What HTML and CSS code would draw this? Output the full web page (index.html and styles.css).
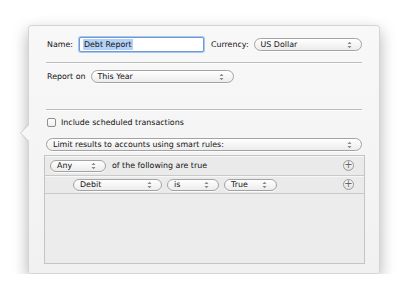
FILE: index.html
```html
<!DOCTYPE html>
<html lang="en">
<head>
  <meta charset="UTF-8" />
  <title>Debt Report</title>
  <link rel="stylesheet" href="styles.css">
</head>
<body>
  <div class="panel">
    <div class="row">
      <span class="label">Name:</span>
      <div class="field"><span class="sel">Debt Report</span></div>
      <span class="label">Currency:</span>
      <div class="popup grow">US Dollar<svg class="arrows" width="5" height="8" viewBox="0 0 5 8"><path d="M0.5 3 L2.5 0.8 L4.5 3 Z M0.5 5 L2.5 7.2 L4.5 5 Z" fill="#888"/></svg></div>
    </div>

    <div class="divider"></div>

    <div class="row report">
      <span class="label">Report on</span>
      <div class="popup w-year">This Year<svg class="arrows" width="5" height="8" viewBox="0 0 5 8"><path d="M0.5 3 L2.5 0.8 L4.5 3 Z M0.5 5 L2.5 7.2 L4.5 5 Z" fill="#888"/></svg></div>
    </div>

    <div class="divider tall"></div>

    <div class="row check-row">
      <span class="checkbox"></span>
      <span class="label">Include scheduled transactions</span>
    </div>

    <div class="popup limit">Limit results to accounts using smart rules:<svg class="arrows" width="5" height="8" viewBox="0 0 5 8"><path d="M0.5 3 L2.5 0.8 L4.5 3 Z M0.5 5 L2.5 7.2 L4.5 5 Z" fill="#888"/></svg></div>

    <div class="rules">
      <div class="rule first">
        <div class="popup w-any">Any<svg class="arrows" width="5" height="8" viewBox="0 0 5 8"><path d="M0.5 3 L2.5 0.8 L4.5 3 Z M0.5 5 L2.5 7.2 L4.5 5 Z" fill="#888"/></svg></div>
        <span class="label">of the following are true</span>
        <span class="plus">+</span>
      </div>
      <div class="rule second">
        <div class="popup w-debit">Debit<svg class="arrows" width="5" height="8" viewBox="0 0 5 8"><path d="M0.5 3 L2.5 0.8 L4.5 3 Z M0.5 5 L2.5 7.2 L4.5 5 Z" fill="#888"/></svg></div>
        <div class="popup w-is">is<svg class="arrows" width="5" height="8" viewBox="0 0 5 8"><path d="M0.5 3 L2.5 0.8 L4.5 3 Z M0.5 5 L2.5 7.2 L4.5 5 Z" fill="#888"/></svg></div>
        <div class="popup w-true">True<svg class="arrows" width="5" height="8" viewBox="0 0 5 8"><path d="M0.5 3 L2.5 0.8 L4.5 3 Z M0.5 5 L2.5 7.2 L4.5 5 Z" fill="#888"/></svg></div>
        <span class="plus">+</span>
      </div>
    </div>
  </div>
</body>
</html>
```

FILE: styles.css
```css
body {
  margin: 0;
  padding: 25px 0 0 28px;
  background-color: #fff;
  font-family: 'DejaVu Sans', sans-serif;
  font-size: 7.9px;
  color: #111;
}

.panel {
  position: relative;
  width: 352px;
  height: 249px;
  box-sizing: border-box;
  padding: 11px 17px 9px;
  background: linear-gradient(#f8f8f8, #f1f1f1);
  border: 1px solid #d4d4d4;
  border-radius: 3px;
  box-shadow: 0 6px 16px rgba(0,0,0,0.3);
  display: flex;
  flex-direction: column;
}

/* callout arrow on the left edge */
.panel::before {
  content: "";
  position: absolute;
  left: -9px;
  top: 97px;
  border-top: 10px solid transparent;
  border-bottom: 10px solid transparent;
  border-right: 9px solid #d0d0d0;
}

.panel::after {
  content: "";
  position: absolute;
  left: -8px;
  top: 98px;
  border-top: 9px solid transparent;
  border-bottom: 9px solid transparent;
  border-right: 9px solid #f6f6f6;
}

.row {
  display: flex;
  align-items: center;
  height: 15px;
}

.label {
  white-space: nowrap;
  padding-left: 1px;
}

.field {
  width: 125px;
  height: 15px;
  box-sizing: border-box;
  margin: 0 6px;
  padding: 1px 3px;
  background: #fff;
  border: 1px solid #6e9bd6;
  border-radius: 2px;
  box-shadow: 0 0 0 1px #a8c6ee;
  display: flex;
  align-items: center;
}

.sel {
  background: #b4d2f7;
  padding: 1px 1px;
}

.popup {
  position: relative;
  height: 13px;
  box-sizing: border-box;
  padding: 0 14px 0 6px;
  border: 1px solid #a3a3a3;
  border-radius: 7px;
  background: linear-gradient(#ffffff, #ececec);
  box-shadow: 0 1px 0 rgba(255,255,255,0.8);
  display: flex;
  align-items: center;
  white-space: nowrap;
  color: #111;
}

.popup .arrows {
  position: absolute;
  right: 9px;
  top: 2px;
}

.grow {
  flex: 1;
  margin-left: 5px;
}

.divider {
  height: 1px;
  margin-top: 10px;
  background: #bcbcbc;
  border-bottom: 1px solid #fdfdfd;
}

.divider.tall {
  margin-top: 26px;
}

.report {
  margin-top: 6px;
  height: 13px;
}

.w-year {
  width: 143px;
  margin-left: 5px;
}

.check-row {
  margin-top: 5px;
  height: 13px;
}

.checkbox {
  width: 9px;
  height: 9px;
  box-sizing: border-box;
  margin: 0 4px 0 1px;
  border: 1px solid #8f8f8f;
  border-radius: 2px;
  background: linear-gradient(#fff, #eee);
}

.limit {
  margin-top: 9px;
}

.rules {
  flex: 1;
  margin: 4px -3px 0 -2px;
  border: 1px solid #c4c4c4;
  background: #ececec;
  display: flex;
  flex-direction: column;
}

.rule {
  display: flex;
  align-items: center;
  gap: 5px;
  border-bottom: 1px solid #c9c9c9;
  background: #eaeaea;
  box-shadow: inset 0 1px 0 #f7f7f7;
}

.rule.first {
  height: 19px;
  padding: 0 10px 0 5px;
}

.rule.second {
  height: 17px;
  padding: 0 10px 0 28px;
}

.rule .popup {
  height: 12px;
}

.rule .popup .arrows {
  top: 1px;
}

.w-any {
  width: 56px;
}

.w-debit {
  width: 89px;
}

.w-is {
  width: 52px;
}

.w-true {
  width: 53px;
}

.plus {
  margin-left: auto;
  width: 11px;
  height: 11px;
  box-sizing: border-box;
  border: 1px solid #9a9a9a;
  border-radius: 50%;
  background: linear-gradient(#fafafa, #e2e2e2);
  color: #666;
  font-size: 10px;
  line-height: 8px;
  text-align: center;
}
```
